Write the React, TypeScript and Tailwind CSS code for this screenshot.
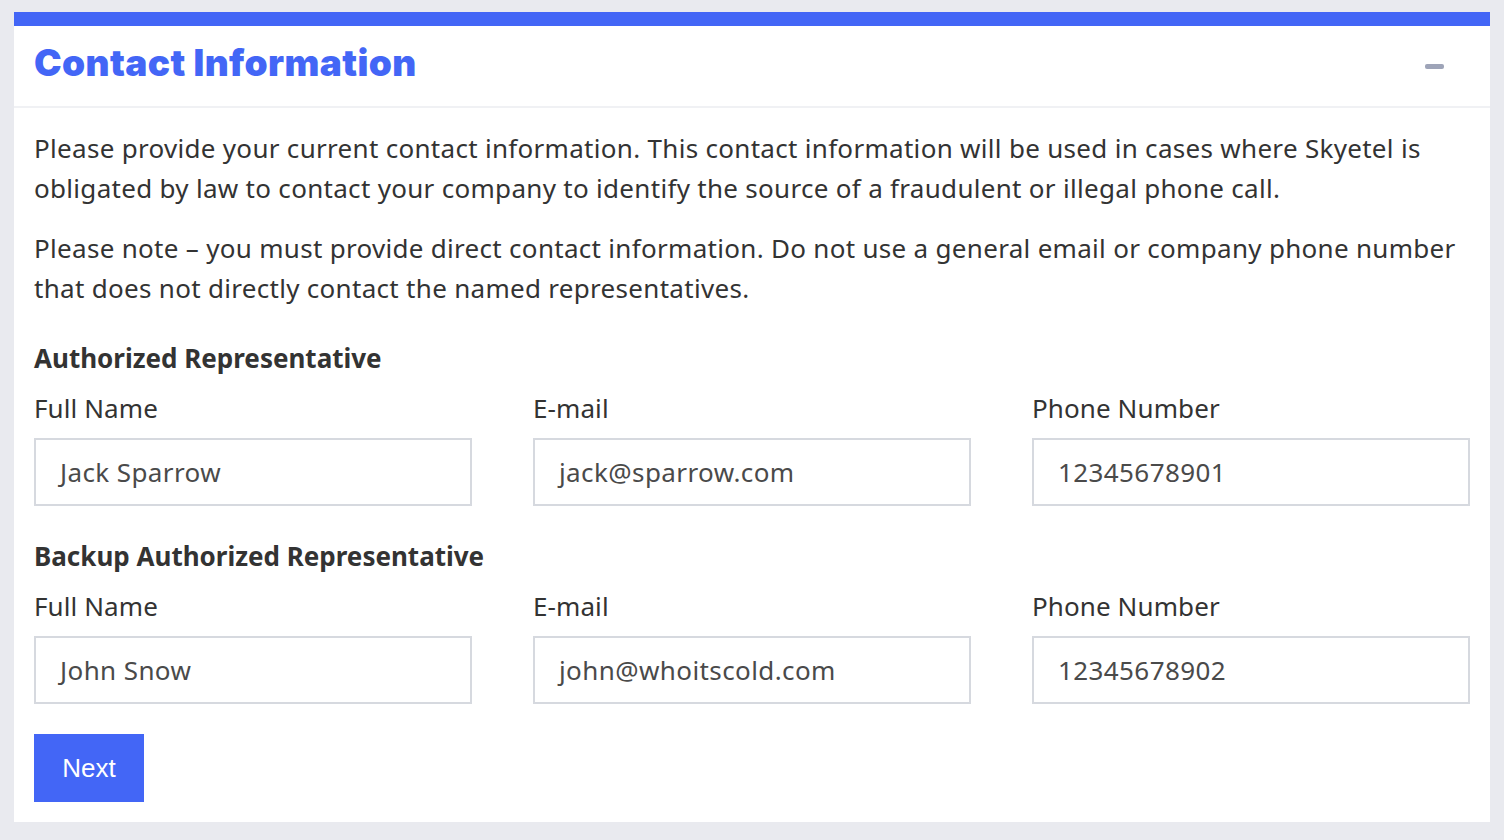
import React from "react";

const body = { fontFamily: '"Noto Sans", "Open Sans", Roboto, sans-serif' };

function Field({ label, value }: { label: string; value: string }) {
  return (
    <div className="flex flex-col">
      <div className="text-[26px] leading-[40px] text-[#333333] tracking-[0.1px]" style={body}>
        {label}
      </div>
      <div className="mt-[10px] h-[68px] border-2 border-[#d6d9df] bg-white pl-[24px] flex items-center">
        <span className="text-[26px] text-[#4a4a4a] tracking-[0.4px]" style={body}>
          {value}
        </span>
      </div>
    </div>
  );
}

export default function App() {
  return (
    <div className="min-h-[840px] w-full bg-[#e9eaef] pt-[12px] pl-[14px] pr-[14px] pb-[18px]">
      <div className="bg-white border-t-[14px] border-[#4366f6]">
        <div className="flex h-[80px] items-center justify-between pl-[20px] pr-[46px]">
          <h1
            className="mb-[8px] text-[37px] font-black text-[#4366f6] leading-none tracking-[0.4px]"
            style={{ fontFamily: 'Inter, "Open Sans", sans-serif' }}
          >
            Contact Information
          </h1>
          <div className="h-[5px] w-[19px] rounded-[2px] bg-[#9ea4b8]" />
        </div>
        <div className="h-[2px] bg-[#f0f1f4]" />
        <div className="px-[20px] pt-[20px] pb-[20px]" style={body}>
          <p className="text-[26px] leading-[40px] text-[#333333] tracking-[0.3px]">
            Please provide your current contact information. This contact information will be used in cases where Skyetel is
            <br />
            obligated by law to contact your company to identify the source of a fraudulent or illegal phone call.
          </p>
          <p className="mt-[20px] text-[26px] leading-[40px] text-[#333333] tracking-[0.3px]">
            Please note – you must provide direct contact information. Do not use a general email or company phone number
            <br />
            that does not directly contact the named representatives.
          </p>
          <h2 className="mt-[30px] text-[26px] leading-[40px] font-bold text-[#333333]">
            Authorized Representative
          </h2>
          <div className="mt-[10px] grid grid-cols-3 gap-x-[61px]">
            <Field label="Full Name" value="Jack Sparrow" />
            <Field label="E-mail" value="jack@sparrow.com" />
            <Field label="Phone Number" value="12345678901" />
          </div>
          <h2 className="mt-[30px] text-[26px] leading-[40px] font-bold text-[#333333]">
            Backup Authorized Representative
          </h2>
          <div className="mt-[10px] grid grid-cols-3 gap-x-[61px]">
            <Field label="Full Name" value="John Snow" />
            <Field label="E-mail" value="john@whoitscold.com" />
            <Field label="Phone Number" value="12345678902" />
          </div>
          <button
            className="mt-[30px] flex h-[68px] w-[110px] items-center justify-center bg-[#4366f6] text-[26px] text-white"
            style={{ fontFamily: '"Liberation Sans", Arial, sans-serif' }}
          >
            Next
          </button>
        </div>
      </div>
    </div>
  );
}
